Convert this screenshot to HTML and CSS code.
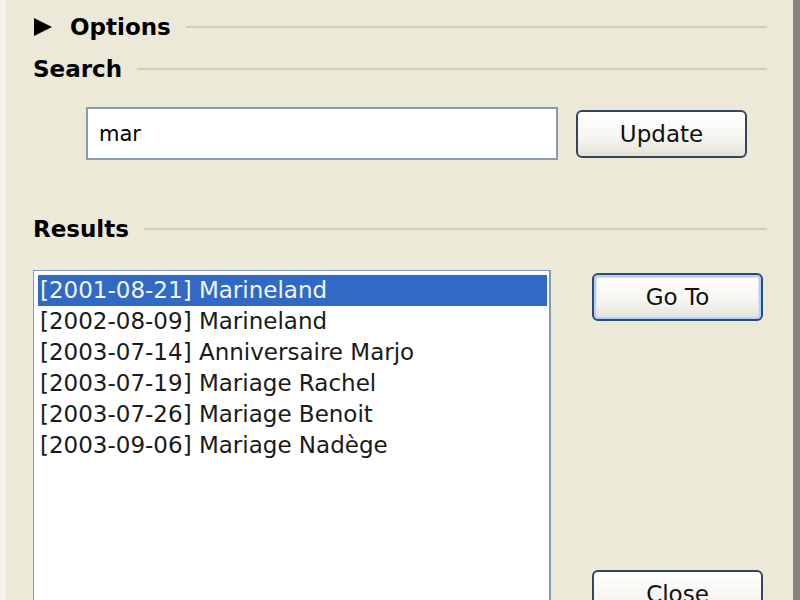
FILE: index.html
```html
<!DOCTYPE html>
<html lang="en">
<head>
  <meta charset="UTF-8">
  <meta name="viewport" content="width=device-width, initial-scale=1.0">
  <title>Search Events</title>
  <link rel="stylesheet" href="styles.css">
</head>
<body>
  <div class="dialog">

    <div class="section-head">
      <svg class="arrow" viewBox="0 0 20 20">
        <polygon points="1,1 19,10 1,19"></polygon>
      </svg>
      <span class="title">Options</span>
      <div class="rule"></div>
    </div>

    <div class="section-head search-head">
      <span class="title">Search</span>
      <div class="rule"></div>
    </div>

    <div class="search-row">
      <div class="textbox">mar</div>
      <button class="btn">Update</button>
    </div>

    <div class="section-head results-head">
      <span class="title">Results</span>
      <div class="rule"></div>
    </div>

    <div class="results-row">
      <ul class="listbox">
        <li class="selected">[2001-08-21] Marineland</li>
        <li>[2002-08-09] Marineland</li>
        <li>[2003-07-14] Anniversaire Marjo</li>
        <li>[2003-07-19] Mariage Rachel</li>
        <li>[2003-07-26] Mariage Benoit</li>
        <li>[2003-09-06] Mariage Nadège</li>
      </ul>

      <div class="side-buttons">
        <button class="btn default">Go To</button>
        <button class="btn">Close</button>
      </div>
    </div>

  </div>
</body>
</html>
```

FILE: styles.css
```css
html, body {
  margin: 0;
  height: 600px;
  overflow: hidden;
}

body {
  background: #ece9d8;
  font-family: "DejaVu Sans", Verdana, sans-serif;
  font-size: 23px;
  color: #000;
}

.dialog {
  box-sizing: border-box;
  width: 800px;
  height: 600px;
  padding: 10px 26px 0 27px;
  border-left: 6px solid #f4f2ea;
  border-right: 7px solid #86847a;
  background: #ece9d8;
}

.section-head {
  display: flex;
  align-items: center;
  gap: 15px;
  height: 34px;
}

.section-head .title {
  font-weight: bold;
  white-space: nowrap;
}

.section-head .rule {
  flex: 1;
  height: 2px;
  background: #d2ceba;
}

.arrow {
  width: 20px;
  height: 20px;
  margin-right: 2px;
}
.arrow polygon {
  fill: #000;
}

.search-head {
  margin-top: 8px;
}

.search-row {
  display: flex;
  align-items: center;
  gap: 18px;
  margin-top: 21px;
  padding-left: 53px;
}

.textbox {
  box-sizing: border-box;
  width: 472px;
  height: 53px;
  padding: 12px 11px;
  border: 2px solid #8a9bb0;
  background: #fff;
  font-size: 21px;
  line-height: 26px;
}

.btn {
  box-sizing: border-box;
  width: 171px;
  height: 48px;
  padding: 0;
  border: 2px solid #34455c;
  border-radius: 6px;
  background: linear-gradient(#ffffff, #f6f5f0 60%, #e4e1d6);
  font-family: "DejaVu Sans", Verdana, sans-serif;
  font-size: 23px;
  color: #111;
}

.btn.default {
  border-color: #2a4a78;
  box-shadow: inset 0 0 0 2px #b9d0f4, inset 0 0 0 3px #d9e5f8;
}

.results-head {
  margin-top: 52px;
}

.results-row {
  display: flex;
  gap: 41px;
  margin-top: 24px;
}

.listbox {
  box-sizing: border-box;
  width: 518px;
  height: 350px;
  margin: 0;
  padding: 4px 2px 0 4px;
  list-style: none;
  border: 1px solid #7f9db9;
  border-width: 1px 2px 1px 1px;
  background: #fff;
}

.listbox li {
  height: 31px;
  line-height: 31px;
  padding-left: 2px;
  white-space: nowrap;
  color: #1a1a1a;
}

.listbox li.selected {
  background: #316ac5;
  color: #f2f6ff;
}

.side-buttons {
  display: flex;
  flex-direction: column;
  justify-content: space-between;
  padding: 3px 0 2px;
}
```
